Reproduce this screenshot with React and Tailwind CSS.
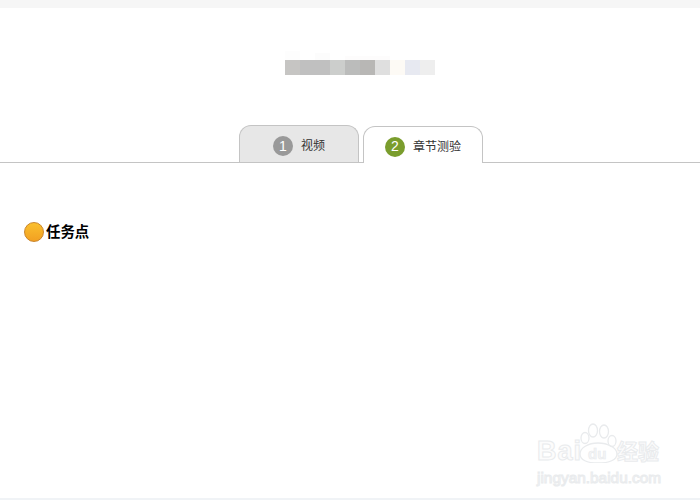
const blocks = [
  { w: "w-[15px]", bg: "bg-[#c6c5c3]" },
  { w: "w-[30px]", bg: "bg-[#c0c0c0]" },
  { w: "w-[15px]", bg: "bg-[#cccecc]" },
  { w: "w-[15px]", bg: "bg-[#bbbcbb]" },
  { w: "w-[15px]", bg: "bg-[#b8b7b5]" },
  { w: "w-[15px]", bg: "bg-[#dfdfdf]" },
  { w: "w-[15px]", bg: "bg-[#fdfaf5]" },
  { w: "w-[15px]", bg: "bg-[#e7e9f1]" },
  { w: "w-[15px]", bg: "bg-[#eeeeee]" },
];

const cjk = "font-['Liberation_Sans','Noto_Sans_CJK_SC',sans-serif]";
const outline = "text-[#fcfcfc] [-webkit-text-stroke:1px_#e9ebed]";

const Watermark = () => (
  <div className="absolute left-[537px] top-[423px] w-[130px] h-[62px]">
    <div className="flex items-end h-[40px]">
      <span className={`${cjk} ${outline} w-[42px] text-[27px] leading-[24px] font-bold tracking-[1px]`}>Bai</span>
      <svg width="39" height="40" viewBox="0 0 39 40" fill="none" stroke="#e9ebed" strokeWidth="1.3">
        <ellipse cx="6" cy="15" rx="4" ry="5.5" />
        <ellipse cx="14" cy="7.5" rx="4.5" ry="6.5" />
        <ellipse cx="25" cy="8.5" rx="4.5" ry="6.5" />
        <ellipse cx="33" cy="18" rx="4" ry="5.5" />
        <path d="M1 31c0-6 8-11 18-11s19 5 19 11c0 6-8 9-19 9S1 37 1 31z" />
        <text x="9" y="36" fontSize="15" fontWeight="700" fill="#f4f5f6" stroke="#e9ebed" strokeWidth="0.6">du</text>
      </svg>
      <span className={`${cjk} ${outline} -ml-[1px] text-[21px] leading-[22px] font-bold whitespace-nowrap`}>经验</span>
    </div>
    <div className={`${cjk} ${outline} text-[15.4px] leading-[18px] mt-[6px] whitespace-nowrap [-webkit-text-stroke-width:0.5px]`}>jingyan.baidu.com</div>
  </div>
);

export default function App() {
  return (
    <div className={`relative w-[700px] h-[500px] overflow-hidden bg-white ${cjk}`}>
      <div className="h-2 bg-[#f6f6f6]" />

      <div className="h-[117px] pt-[42px] pl-[285px]">
        <div className="flex items-end h-[10px]">
          <div className="w-[15px] h-[9px] bg-[#fdfdfd]" />
          <div className="w-[15px]" />
          <div className="w-[15px] h-[7px] bg-[#fcfcfc]" />
          <div className="w-[15px]" />
          <div className="w-[45px] h-[4px] bg-[#fdfcfc]" />
        </div>
        <div className="flex h-[15px]">
          {blocks.map((b, i) => (
            <div key={i} className={`${b.w} ${b.bg}`} />
          ))}
        </div>
      </div>

      <div className="flex items-end gap-1 h-[38px] pl-[239px] border-b border-[#c4c4c4]">
        <div className="flex items-center justify-center gap-2 w-[120px] h-[37px] pt-[4px] bg-[#e7e7e7] border border-b-0 border-[#c4c4c4] rounded-t-[12px]">
          <span className="flex items-center justify-center w-[20px] h-[20px] rounded-full bg-[#999999] text-white text-[14px]">1</span>
          <span className="text-[12px] text-[#333333]">视频</span>
        </div>
        <div className="flex items-center justify-center gap-2 w-[120px] h-[37px] pt-[3px] -mb-px bg-white border border-b-0 border-[#c4c4c4] rounded-t-[12px]">
          <span className="flex items-center justify-center w-[20px] h-[20px] rounded-full bg-[#7a9d2d] text-white text-[14px]">2</span>
          <span className="text-[12px] text-[#333333]">章节测验</span>
        </div>
      </div>

      <div className="flex items-center gap-[2px] mt-[58px] ml-6">
        <span className="w-[20px] h-[20px] rounded-full border border-[#c9852b] bg-gradient-to-b from-[#fac02e] to-[#f2a022]" />
        <span className="text-[14.4px] font-bold text-black leading-[22px]">任务点</span>
      </div>

      <Watermark />
      <div className="absolute left-0 right-0 bottom-0 h-[2px] bg-[#f0f3f6]" />
    </div>
  );
}
